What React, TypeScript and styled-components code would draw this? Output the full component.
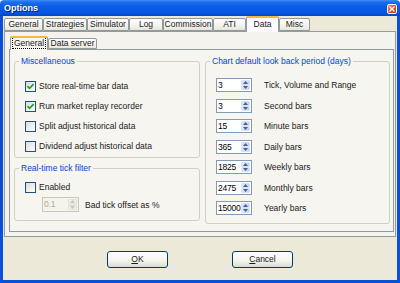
import React from 'react';
import styled, { createGlobalStyle } from 'styled-components';

const GlobalStyle = createGlobalStyle`
  html, body {
    margin: 0;
    padding: 0;
    background: #ffffff;
  }
  body {
    font-family: "Liberation Sans", Arial, sans-serif;
    font-size: 8.5px;
    color: #1a1a1a;
  }
  * {
    box-sizing: border-box;
  }
`;

const outerTabs = [
  { label: 'General', w: 39 },
  { label: 'Strategies', w: 44 },
  { label: 'Simulator', w: 42 },
  { label: 'Log', w: 34 },
  { label: 'Commission', w: 50 },
  { label: 'ATI', w: 33 },
  { label: 'Data', w: 33, active: true },
  { label: 'Misc', w: 31 },
];

const miscOptions = [
  { label: 'Store real-time bar data', checked: true },
  { label: 'Run market replay recorder', checked: true },
  { label: 'Split adjust historical data', checked: false },
  { label: 'Dividend adjust historical data', checked: false },
];

const lookBack = [
  { value: '3', label: 'Tick, Volume and Range' },
  { value: '3', label: 'Second bars' },
  { value: '15', label: 'Minute bars' },
  { value: '365', label: 'Daily bars' },
  { value: '1825', label: 'Weekly bars' },
  { value: '2475', label: 'Monthly bars' },
  { value: '15000', label: 'Yearly bars' },
];

const CheckMark = () => (
  <svg width="9" height="9" viewBox="0 0 9 9">
    <path d="M1.5 4.2 L3.6 6.3 L7.6 2.2" fill="none" stroke="#21a121" strokeWidth="1.7" />
  </svg>
);

const Arrow = ({ up, color }: { up?: boolean; color: string }) => (
  <svg width="5" height="3" viewBox="0 0 5 3">
    <path d={up ? 'M0 3 L2.5 0 L5 3 Z' : 'M0 0 L2.5 3 L5 0 Z'} fill={color} />
  </svg>
);

const Spinner = ({ value, width, disabled }: { value: string; width: number; disabled?: boolean }) => (
  <SpinBox $w={width} $disabled={disabled}>
    <SpinValue $disabled={disabled}>{value}</SpinValue>
    <SpinButtons>
      <SpinHalf $disabled={disabled}>
        <Arrow up color={disabled ? '#c9c7ba' : '#4d6185'} />
      </SpinHalf>
      <SpinHalf $disabled={disabled}>
        <Arrow color={disabled ? '#c9c7ba' : '#4d6185'} />
      </SpinHalf>
    </SpinButtons>
  </SpinBox>
);

export default function App() {
  return (
    <>
      <GlobalStyle />
      <Window>
        <TitleBar>
          <Title>Options</Title>
          <CloseButton>
            <svg width="6" height="6" viewBox="0 0 6 6">
              <path d="M0.5 0.5 L5.5 5.5 M5.5 0.5 L0.5 5.5" stroke="#ffffff" strokeWidth="1.4" />
            </svg>
          </CloseButton>
        </TitleBar>
        <Frame>
          <OuterTabStrip>
            {outerTabs.map((t) => (
              <OuterTab key={t.label} $w={t.w} $active={t.active}>
                {t.label}
              </OuterTab>
            ))}
          </OuterTabStrip>
          <OuterPanel>
            <InnerTabStrip>
              <InnerTab $w={38} $active>
                <Focus>General</Focus>
              </InnerTab>
              <InnerTab $w={49}>Data server</InnerTab>
            </InnerTabStrip>
            <InnerPanel>
              <LeftColumn>
                <Group>
                  <Legend>Miscellaneous</Legend>
                  <CheckList>
                    {miscOptions.map((o) => (
                      <CheckRow key={o.label}>
                        <CheckBox>{o.checked && <CheckMark />}</CheckBox>
                        {o.label}
                      </CheckRow>
                    ))}
                  </CheckList>
                </Group>
                <Group>
                  <Legend>Real-time tick filter</Legend>
                  <FilterBody>
                    <CheckRow>
                      <CheckBox />
                      Enabled
                    </CheckRow>
                    <OffsetRow>
                      <Spinner value="0.1" width={37} disabled />
                      <span>Bad tick offset as %</span>
                    </OffsetRow>
                  </FilterBody>
                </Group>
              </LeftColumn>
              <Group>
                <Legend>Chart default look back period (days)</Legend>
                <SpinList>
                  {lookBack.map((r) => (
                    <SpinRow key={r.label}>
                      <Spinner value={r.value} width={36} />
                      {r.label}
                    </SpinRow>
                  ))}
                </SpinList>
              </Group>
            </InnerPanel>
          </OuterPanel>
          <ButtonRow>
            <Button>
              <u>O</u>K
            </Button>
            <Button>
              <u>C</u>ancel
            </Button>
          </ButtonRow>
        </Frame>
      </Window>
    </>
  );
}

const Window = styled.div`
  width: 400px;
  height: 283px;
  display: flex;
  flex-direction: column;
  overflow: hidden;
`;

const TitleBar = styled.div`
  height: 16px;
  flex: none;
  display: flex;
  align-items: flex-start;
  justify-content: space-between;
  padding: 0 3px 0 4px;
  background: linear-gradient(
    to bottom,
    #3d8ff8 0%,
    #1f6ff0 12%,
    #0b5ce6 40%,
    #0755e0 80%,
    #0447c6 100%
  );
  border-radius: 4px 4px 0 0;
`;

const Title = styled.div`
  color: #ffffff;
  font-weight: bold;
  font-size: 9px;
  line-height: 16px;
  text-shadow: 1px 1px 0 #0a1e7a;
`;

const CloseButton = styled.div`
  width: 10px;
  height: 10px;
  margin-top: 4px;
  border: 1px solid #ffffff;
  border-radius: 2px;
  background: linear-gradient(135deg, #f08c6c, #d9481e 60%, #c03a12);
  display: flex;
  align-items: center;
  justify-content: center;
`;

const Frame = styled.div`
  flex: 1;
  display: flex;
  flex-direction: column;
  background: #ece9d8;
  border: 3px solid #0b4fd8;
  border-top: none;
  padding: 0 1px;
`;

const OuterTabStrip = styled.div`
  height: 15px;
  flex: none;
  display: flex;
  align-items: flex-end;
  position: relative;
  z-index: 1;
`;

const OuterTab = styled.div<{ $w: number; $active?: boolean }>`
  width: ${({ $w }) => $w}px;
  height: ${({ $active }) => ($active ? 16 : 13)}px;
  margin-bottom: ${({ $active }) => ($active ? -1 : 0)}px;
  border: 1px solid #919b9c;
  border-bottom: ${({ $active }) => ($active ? 'none' : '1px solid #919b9c')};
  border-top: ${({ $active }) => ($active ? '2px solid #f5b83a' : '1px solid #919b9c')};
  border-radius: 2px 2px 0 0;
  background: ${({ $active }) =>
    $active ? '#fcfcfe' : 'linear-gradient(to bottom, #ffffff, #f1f0ea 70%, #e6e4da)'};
  font-size: 8.5px;
  line-height: ${({ $active }) => ($active ? 13 : 11)}px;
  text-align: center;
  white-space: nowrap;
  overflow: hidden;
`;

const OuterPanel = styled.div`
  height: 206px;
  flex: none;
  display: flex;
  flex-direction: column;
  border: 1px solid #919b9c;
  background: #f4f3ee;
  padding: 4px 1px 4px 4px;
`;

const InnerTabStrip = styled.div`
  height: 13px;
  flex: none;
  display: flex;
  align-items: flex-end;
  padding-left: 1px;
  position: relative;
  z-index: 1;
`;

const InnerTab = styled.div<{ $w: number; $active?: boolean }>`
  width: ${({ $w }) => $w}px;
  height: ${({ $active }) => ($active ? 14 : 11)}px;
  margin-bottom: ${({ $active }) => ($active ? -1 : 0)}px;
  border: 1px solid #919b9c;
  border-bottom: ${({ $active }) => ($active ? 'none' : '1px solid #919b9c')};
  border-top: ${({ $active }) => ($active ? '2px solid #f5b83a' : '1px solid #919b9c')};
  border-radius: 2px 2px 0 0;
  background: ${({ $active }) =>
    $active ? '#f6f5f0' : 'linear-gradient(to bottom, #ffffff, #f1f0ea 70%, #e6e4da)'};
  font-size: 8.5px;
  line-height: ${({ $active }) => ($active ? 11 : 9)}px;
  text-align: center;
  white-space: nowrap;
  overflow: hidden;
`;

const Focus = styled.span`
  outline: 1px dotted #000000;
  outline-offset: 0;
  padding: 0 1px;
`;

const InnerPanel = styled.div`
  flex: 1;
  display: grid;
  grid-template-columns: 186px 1fr;
  column-gap: 5px;
  align-items: start;
  border: 1px solid #919b9c;
  background: #f6f5f0;
  padding: 6px 3px 7px 4px;
`;

const LeftColumn = styled.div`
  display: flex;
  flex-direction: column;
  gap: 5px;
`;

const Group = styled.fieldset`
  margin: 0;
  padding: 0;
  min-width: 0;
  border: 1px solid #d0d0bf;
  border-radius: 3px;
`;

const Legend = styled.legend`
  margin-left: 4px;
  padding: 0 2px;
  color: #0046d5;
  font-size: 8.5px;
  line-height: 10px;
`;

const CheckList = styled.div`
  display: flex;
  flex-direction: column;
  padding: 10px 0 1px 10px;
`;

const CheckRow = styled.div`
  height: 20px;
  display: flex;
  align-items: center;
  gap: 3px;
  white-space: nowrap;
`;

const CheckBox = styled.div`
  width: 11px;
  height: 11px;
  flex: none;
  border: 1px solid #1c5180;
  background: linear-gradient(135deg, #dcdcd7, #ffffff);
  display: flex;
  align-items: center;
  justify-content: center;
`;

const FilterBody = styled.div`
  display: flex;
  flex-direction: column;
  padding: 4px 0 8px 10px;
`;

const OffsetRow = styled.div`
  display: flex;
  align-items: center;
  gap: 6px;
  padding-left: 17px;
`;

const SpinList = styled.div`
  display: flex;
  flex-direction: column;
  gap: 6.5px;
  padding: 12px 0 8px 10px;
`;

const SpinRow = styled.div`
  display: flex;
  align-items: center;
  gap: 12px;
  white-space: nowrap;
`;

const SpinBox = styled.div<{ $w: number; $disabled?: boolean }>`
  width: ${({ $w }) => $w}px;
  height: ${({ $disabled }) => ($disabled ? 15 : 14)}px;
  flex: none;
  display: flex;
  align-items: stretch;
  border: 1px solid ${({ $disabled }) => ($disabled ? '#c9c7ba' : '#7f9db9')};
  background: ${({ $disabled }) => ($disabled ? '#f5f4ea' : '#ffffff')};
  padding: 1px 1px 1px 0;
`;

const SpinValue = styled.div<{ $disabled?: boolean }>`
  flex: 1;
  min-width: 0;
  padding-left: 1px;
  font-size: 8.5px;
  line-height: 10px;
  letter-spacing: -0.2px;
  color: ${({ $disabled }) => ($disabled ? '#aca899' : '#000000')};
  white-space: nowrap;
`;

const SpinButtons = styled.div`
  width: 9px;
  flex: none;
  display: flex;
  flex-direction: column;
`;

const SpinHalf = styled.div<{ $disabled?: boolean }>`
  flex: 1;
  display: flex;
  align-items: center;
  justify-content: center;
  border-radius: 1px;
  border: 1px solid ${({ $disabled }) => ($disabled ? '#e4e2d8' : '#d6e2fb')};
  background: ${({ $disabled }) =>
    $disabled ? '#efeee6' : 'linear-gradient(135deg, #e3ebfd, #bccff7)'};
`;

const ButtonRow = styled.div`
  display: flex;
  justify-content: center;
  gap: 64px;
  padding-top: 14px;
`;

const Button = styled.div`
  width: 61px;
  height: 17px;
  border: 1px solid #003c74;
  border-radius: 3px;
  background: linear-gradient(to bottom, #ffffff, #f4f3ee 60%, #dcd8cc);
  font-size: 8.5px;
  line-height: 15px;
  text-align: center;
`;
